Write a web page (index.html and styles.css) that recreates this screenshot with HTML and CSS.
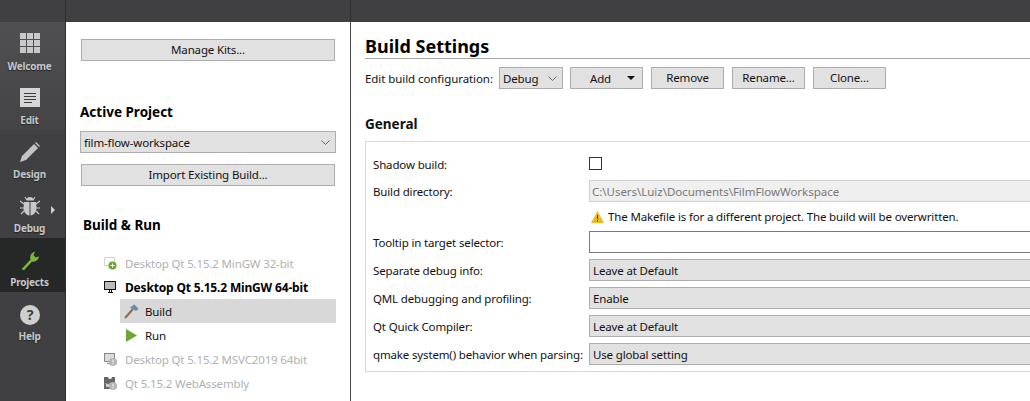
FILE: index.html
```html
<html>

<head>
    <meta name="viewport" content="width=device-width, initial-scale=1.0">
    <meta charset="UTF-8">
    <title>Projects - Qt Creator</title>
    <link rel="stylesheet" href="styles.css">
</head>

<body>
    <div id="topbar">
        <div class="top-left"></div>
        <div class="top-mid"></div>
        <div class="top-right"></div>
    </div>
    <div id="workspace">
        <div id="modes">
            <div class="mode welcome">
                <svg width="20" height="20" viewBox="0 0 20 20" fill="#c8c8c8">
                    <rect x="0" y="0" width="6" height="6" /><rect x="7" y="0" width="6" height="6" /><rect x="14" y="0" width="6" height="6" />
                    <rect x="0" y="7" width="6" height="6" /><rect x="7" y="7" width="6" height="6" /><rect x="14" y="7" width="6" height="6" />
                    <rect x="0" y="14" width="6" height="6" /><rect x="7" y="14" width="6" height="6" /><rect x="14" y="14" width="6" height="6" />
                </svg>
                <span>Welcome</span>
            </div>
            <div class="mode edit">
                <svg width="20" height="20" viewBox="0 0 20 20">
                    <rect width="20" height="19" fill="#d6d6d6" />
                    <path d="M4 5.500h12M4 8.500h12M4 11.500h12M4 14.500h8" stroke="#3a3a3a" stroke-width="1" />
                </svg>
                <span>Edit</span>
            </div>
            <div class="mode">
                <svg width="20" height="20" viewBox="0 0 20 20" fill="#c4c4c4">
                    <path d="M0 20l2-6L14 2l4 4L6 18zM15 1l1-1 4 4-1 1z" />
                </svg>
                <span>Design</span>
            </div>
            <div class="mode debug">
                <svg width="20" height="20" viewBox="0 0 20 20" fill="#c8c8c8">
                    <path d="M6.500 4.500a3.500 3.500 0 0 1 7 0z" />
                    <path d="M4 6h5.500v13.500C6 19 3.500 16 3.500 12zM10.500 6H16l.5 6c0 4-2.500 7-6 7.500z" />
                    <path d="M5 1l2 3M15 1l-2 3M0 5l4 3M20 5l-4 3M0 12h4M20 12h-4M1 18l3-3M19 18l-3-3" stroke="#c8c8c8" stroke-width="1.200" fill="none" />
                </svg>
                <span>Debug</span>
                <i class="arrow"></i>
            </div>
            <div class="mode projects">
                <svg width="20" height="20" viewBox="0 0 20 20">
                    <path d="M2.200 18.600 L10.500 9.500 C9.500 6.500 11 2.500 15 1.500 L13.500 5 L15.500 7.500 L19 6.500 C18.500 10 15 12.500 12 11.500 L4.500 19.800 C3.500 20.400 1.700 19.600 2.200 18.600z" fill="#7bb93c" />
                </svg>
                <span>Projects</span>
            </div>
            <div class="mode help">
                <svg width="20" height="20" viewBox="0 0 21 21">
                    <circle cx="10.500" cy="10.500" r="10.500" fill="#cfcfcf" />
                    <text x="10.500" y="16" text-anchor="middle" class="help-mark">?</text>
                </svg>
                <span>Help</span>
            </div>
        </div>

        <div id="side">
            <div class="btn wide">Manage Kits...</div>
            <h3 class="active-title">Active Project</h3>
            <div class="combo project">
                <span>film-flow-workspace</span>
                <svg class="chev" width="9" height="5" viewBox="0 0 9 5"><path d="M.5.5l4 4 4-4" fill="none" stroke="#666" /></svg>
            </div>
            <div class="btn wide">Import Existing Build...</div>
            <h3 class="run-title">Build &amp; Run</h3>
            <div class="kits">
                <div class="kit off">
                    <svg width="13" height="13" viewBox="0 0 13 13">
                        <rect x=".5" y=".5" width="10" height="8" fill="#fff" stroke="#d4d4d4" />
                        <circle cx="8.500" cy="8.500" r="4" fill="#6aa52e" />
                        <path d="M6.500 8.500h4M8.500 6.500v4" stroke="#fff" />
                    </svg>
                    <span>Desktop Qt 5.15.2 MinGW 32-bit</span>
                </div>
                <div class="kit on">
                    <svg width="13" height="13" viewBox="0 0 13 13">
                        <rect x=".5" y=".5" width="11" height="8" fill="#bbb" stroke="#111" />
                        <path d="M4 11.500h5M5.500 9v2.500M7.500 9v2.500" stroke="#111" />
                    </svg>
                    <span>Desktop Qt 5.15.2 MinGW 64-bit</span>
                </div>
                <div class="sub current">
                    <svg width="15" height="15" viewBox="0 0 15 15">
                        <path d="M1 14L9 5" stroke="#8a6d52" stroke-width="2" />
                        <path d="M6 3.500l4.500-3 4 4.500-2.500 2z" fill="#6d8aa3" />
                    </svg>
                    <span>Build</span>
                </div>
                <div class="sub">
                    <svg width="15" height="15" viewBox="0 0 15 15"><path d="M2 1l11 6.500L2 14z" fill="#6aa92f" /></svg>
                    <span>Run</span>
                </div>
                <div class="kit off">
                    <svg width="13" height="13" viewBox="0 0 13 13">
                        <rect x=".5" y=".5" width="10" height="8" fill="#ddd" stroke="#888" />
                        <path d="M3 10.500h4" stroke="#888" />
                        <circle cx="9" cy="9" r="4" fill="#b4b4b4" />
                        <path d="M9 6.500v3M9 10.500v1" stroke="#fff" />
                    </svg>
                    <span>Desktop Qt 5.15.2 MSVC2019 64bit</span>
                </div>
                <div class="kit off">
                    <svg width="13" height="13" viewBox="0 0 13 13">
                        <path d="M0 0h4a2 2 0 0 0 4 0h3v12H0z" fill="#666" />
                        <path d="M2 6l1 4 1-3 1 3 1-4" stroke="#ddd" fill="none" />
                        <circle cx="9" cy="9" r="4" fill="#b4b4b4" />
                        <path d="M9 6.500v3M9 10.500v1" stroke="#fff" />
                    </svg>
                    <span>Qt 5.15.2 WebAssembly</span>
                </div>
            </div>
        </div>

        <div id="main">
            <h1>Build Settings</h1>
            <div class="toolbar">
                <span class="toolbar-label">Edit build configuration:</span>
                <div class="combo debug-combo">
                    <span>Debug</span>
                    <svg class="chev" width="9" height="5" viewBox="0 0 9 5"><path d="M.5.5l4 4 4-4" fill="none" stroke="#666" /></svg>
                </div>
                <div class="btn add"><span>Add</span><i class="caret"></i></div>
                <div class="btn tool">Remove</div>
                <div class="btn tool">Rename...</div>
                <div class="btn tool">Clone...</div>
            </div>
            <h2>General</h2>
            <div class="settings">
                <label class="shadow-label">Shadow build:</label>
                <div class="cell"><div class="check"></div></div>
                <label>Build directory:</label>
                <div class="field disabled">C:\Users\Luiz\Documents\FilmFlowWorkspace</div>
                <label></label>
                <div class="warn">
                    <svg width="13" height="12" viewBox="0 0 13 12"><path d="M6.500 0L13 12H0z" fill="#ecb91f" /><path d="M6.500 4v4M6.500 9v1.500" stroke="#333" /></svg>
                    <span>The Makefile is for a different project. The build will be overwritten.</span>
                </div>
                <label>Tooltip in target selector:</label>
                <div class="field input"></div>
                <label>Separate debug info:</label>
                <div class="field choice">Leave at Default</div>
                <label>QML debugging and profiling:</label>
                <div class="field choice">Enable</div>
                <label>Qt Quick Compiler:</label>
                <div class="field choice">Leave at Default</div>
                <label>qmake system() behavior when parsing:</label>
                <div class="field choice">Use global setting</div>
            </div>
        </div>
    </div>
</body>

</html>
```

FILE: styles.css
```css
html,
body {
    margin: 0;
    height: 100%;
    overflow: hidden;
    background: #fff;
}

body {
    display: flex;
    flex-direction: column;
    font-family: "Noto Sans", "Open Sans", sans-serif;
    font-size: 11.500px;
    letter-spacing: -0.15px;
    color: #111;
}

#topbar {
    display: flex;
    height: 22px;
    background: #404042;
}

.top-left {
    width: 65px;
    border-right: 1px solid #303032;
}

.top-mid {
    width: 284px;
    border-right: 1px solid #303032;
}

#workspace {
    display: flex;
    flex: 1;
    min-height: 0;
}

/* mode bar */
#modes {
    width: 65px;
    flex: none;
    background: #404042;
    border-right: 1px solid #2e2e30;
}

.mode {
    position: relative;
    height: 54px;
    display: flex;
    flex-direction: column;
    align-items: center;
    justify-content: flex-start;
    padding: 12px 6px 0 0;
    box-sizing: border-box;
    color: #c4c8cc;
    font-size: 10px;
    font-weight: 700;
    letter-spacing: -0.2px;
}

.mode span {
    position: absolute;
    left: 0;
    right: 6px;
    top: 37px;
    text-align: center;
    line-height: 15px;
    text-shadow: 0 1px 1px #222;
}

.welcome {
    padding-top: 11px;
    background: linear-gradient(#505052, #4a4a4c);
}

.edit {
    background: linear-gradient(#4a4a4c, #444446);
}

.projects {
    background: #262827;
}

.help {
    padding-top: 13px;
}

.arrow {
    position: absolute;
    left: 51px;
    top: 22px;
    border-left: 4px solid #ccc;
    border-top: 4px solid transparent;
    border-bottom: 4px solid transparent;
}

.help-mark {
    font-family: "Noto Sans", sans-serif;
    font-size: 15px;
    font-weight: 700;
    fill: #404042;
}

/* left panel */
#side {
    width: 285px;
    flex: none;
    padding: 17px 14px 0 14px;
    box-sizing: border-box;
    border-right: 1px solid #4a4a4a;
}

.btn {
    display: flex;
    align-items: center;
    justify-content: center;
    height: 22px;
    box-sizing: border-box;
    padding-bottom: 1px;
    border: 1px solid #adadad;
    background: #e1e1e1;
}

.wide {
    margin: 0 1px;
}

h3 {
    margin: 0;
    font-size: 13.500px;
    font-weight: 700;
    letter-spacing: 0;
    color: #000;
    line-height: 18px;
}

.active-title {
    margin-top: 42px;
    margin-bottom: 10px;
}

.combo {
    display: flex;
    align-items: center;
    justify-content: space-between;
    height: 22px;
    box-sizing: border-box;
    border: 1px solid #adadad;
    background: #e1e1e1;
    padding: 0 5px 0 3px;
}

.project {
    margin-bottom: 11px;
}

.run-title {
    margin-top: 30px;
    margin-left: 3px;
}

.kits {
    margin-top: 17px;
    margin-left: 24px;
}

.kit,
.sub {
    display: flex;
    align-items: center;
    height: 24px;
}

.kit svg {
    width: 13px;
    margin-right: 8px;
    flex: none;
}

.kit.off {
    color: #b0b0b0;
}

.kit.on {
    color: #000;
    font-size: 12px;
    font-weight: 700;
    letter-spacing: -0.17px;
}

.sub {
    margin-left: 16px;
    padding-left: 4px;
}

.sub svg {
    margin-right: 6px;
    flex: none;
}

.current {
    background: #d8d8d8;
}

/* main area */
#main {
    flex: 1;
    min-width: 0;
    padding: 13px 0 0 14px;
    overflow: hidden;
}

h1 {
    margin: 0;
    font-size: 18px;
    font-weight: 700;
    letter-spacing: 0;
    color: #000;
    line-height: 23px;
    padding-bottom: 0;
    border-bottom: 1px solid #a8a8a8;
}

.toolbar {
    display: flex;
    align-items: center;
    margin-top: 8px;
}

.toolbar-label {
    width: 134px;
    white-space: nowrap;
    letter-spacing: -0.07px;
}

.debug-combo {
    width: 64px;
    margin-right: 7px;
}

.add {
    width: 73px;
    justify-content: space-between;
    padding: 0 7px 0 19px;
    margin-right: 8px;
}

.caret {
    border-top: 4px solid #111;
    border-left: 4px solid transparent;
    border-right: 4px solid transparent;
}

.tool {
    width: 73px;
    margin-right: 8px;
}

h2 {
    margin: 26px 0 8px 0;
    font-size: 13.500px;
    font-weight: 700;
    letter-spacing: 0;
    line-height: 18px;
    color: #111;
}

.settings {
    display: grid;
    width: 700px;
    box-sizing: border-box;
    grid-template-columns: 216px 1fr;
    grid-template-rows: 22px 22px 17px repeat(5, 22px);
    row-gap: 6px;
    padding: 10px 0 6px 7px;
    border: 1px solid #d8d8d8;
}

.settings label {
    display: flex;
    align-items: center;
    white-space: nowrap;
}

.settings .shadow-label {
    padding-top: 3px;
}

.cell {
    display: flex;
    align-items: center;
}

.check {
    width: 13px;
    height: 13px;
    box-sizing: border-box;
    border: 1px solid #333;
}

.field {
    height: 22px;
    box-sizing: border-box;
    display: flex;
    align-items: center;
    padding-left: 3px;
    border: 1px solid #adadad;
    background: #e1e1e1;
}

.disabled {
    padding-left: 2px;
    letter-spacing: -0.03px;
    background: #efefef;
    border-color: #d0d0d0;
    color: #777;
}

.input {
    background: #fff;
    border-color: #7a7a7a;
}

.warn {
    display: flex;
    align-items: center;
    gap: 4px;
    padding-left: 2px;
}
```
